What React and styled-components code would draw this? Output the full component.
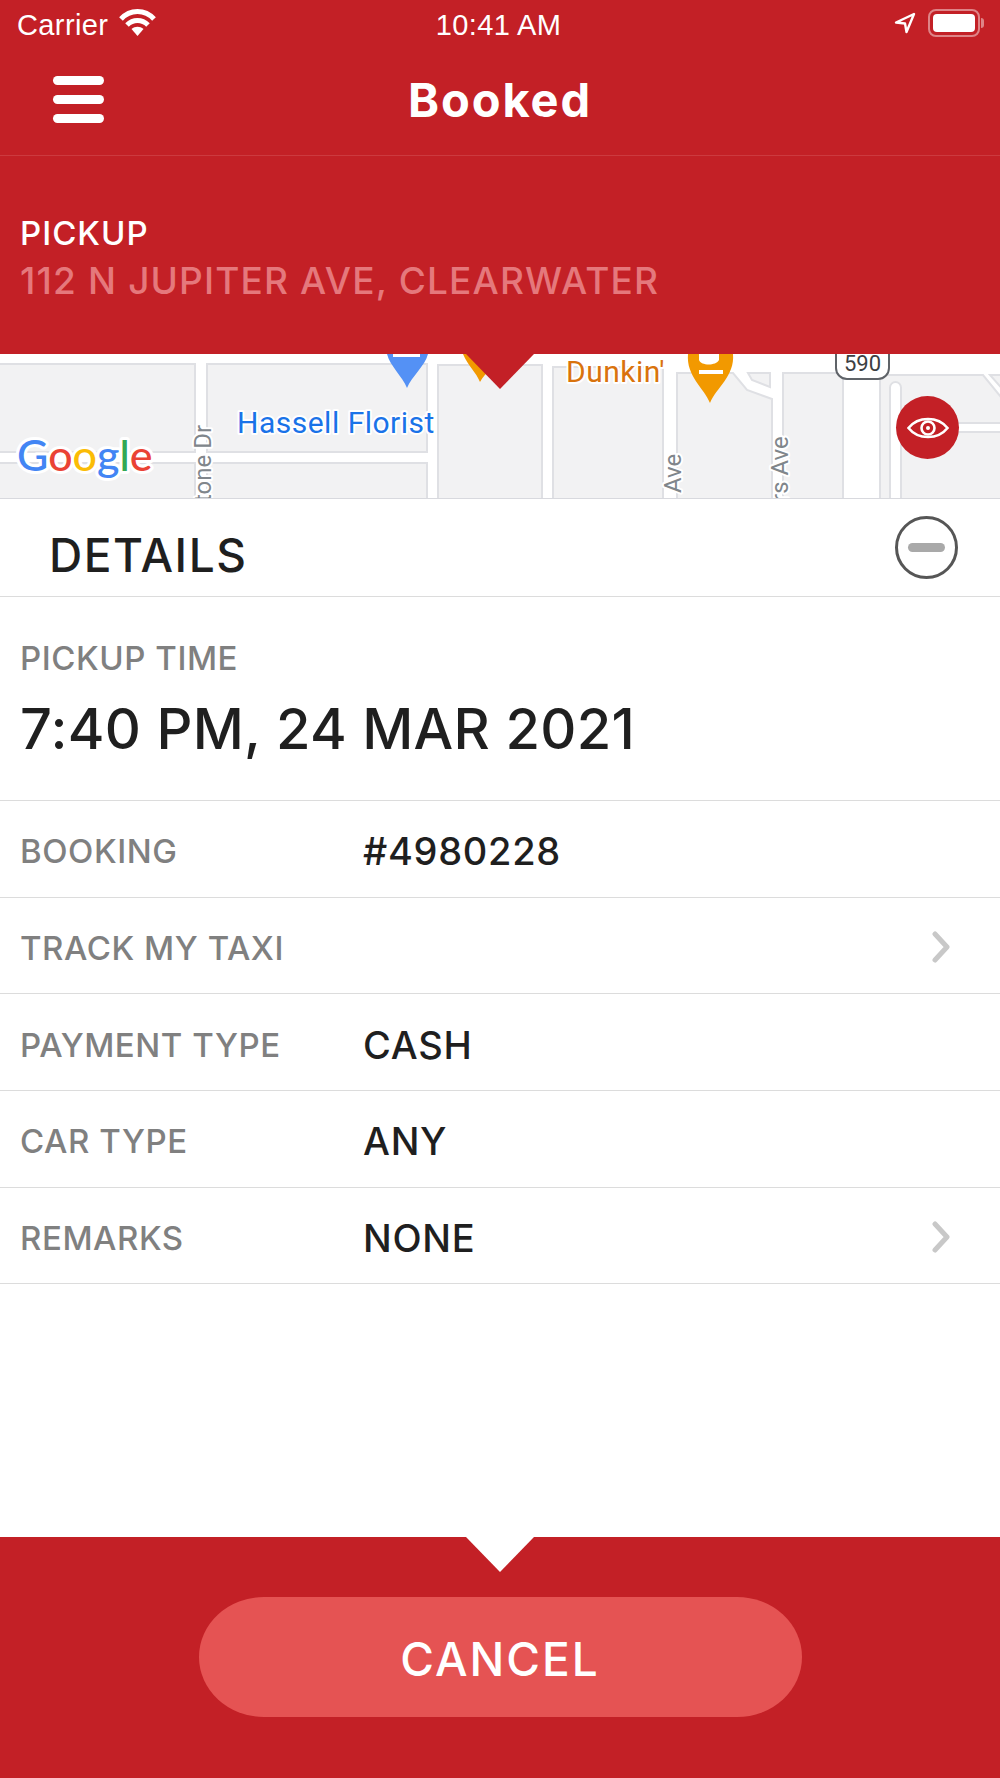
import React from 'react';
import styled, { createGlobalStyle } from 'styled-components';

const red = '#c32026';
const line = '#dcdcdc';

const GlobalStyle = createGlobalStyle`
  html, body {
    margin: 0;
    padding: 0;
    background: #fff;
  }
  body {
    font-family: Inter, "Liberation Sans", sans-serif;
  }
`;

const Page = styled.div`
  width: 1000px;
  height: 1778px;
  display: flex;
  flex-direction: column;
  overflow: hidden;
  background: #fff;
`;

const Top = styled.header`
  background: ${red};
  color: #fff;
`;

const StatusBar = styled.div`
  height: 46px;
  display: grid;
  grid-template-columns: 1fr auto 1fr;
  align-items: center;
  padding: 4px 20px 0 17px;
  box-sizing: border-box;
  font-family: "Liberation Sans", Arial, sans-serif;
  font-size: 29px;
  letter-spacing: 0.4px;
`;

const StatusLeft = styled.div`
  display: flex;
  align-items: center;
  gap: 11px;

  svg {
    margin-top: -4px;
  }
`;

const StatusRight = styled.div`
  display: flex;
  align-items: center;
  justify-content: flex-end;
  gap: 12px;

  svg {
    margin-top: -4px;
  }
`;

const Battery = styled.div`
  position: relative;
  box-sizing: border-box;
  width: 52px;
  height: 28px;
  margin-top: -4px;
  padding: 3px;
  border: 2px solid rgba(255, 255, 255, 0.45);
  border-radius: 8px;

  &::before {
    content: '';
    display: block;
    height: 100%;
    background: #fff;
    border-radius: 4px;
  }

  &::after {
    content: '';
    position: absolute;
    right: -6px;
    top: 7px;
    width: 3px;
    height: 10px;
    background: rgba(255, 255, 255, 0.45);
    border-radius: 0 3px 3px 0;
  }
`;

const Nav = styled.div`
  height: 110px;
  box-sizing: border-box;
  display: grid;
  grid-template-columns: 1fr auto 1fr;
  align-items: center;
  padding: 0 53px 2px;
  border-bottom: 1px solid #cc3a3f;
`;

const Burger = styled.div`
  width: 51px;
  display: flex;
  flex-direction: column;
  gap: 10px;

  span {
    height: 9px;
    background: #fff;
    border-radius: 5px;
  }
`;

const Title = styled.h1`
  margin: 0;
  font-size: 47px;
  line-height: 60px;
  font-weight: 700;
  letter-spacing: 1.9px;
`;

const Pickup = styled.div`
  height: 198px;
  box-sizing: border-box;
  padding: 57px 20px 0;
`;

const PickupLabel = styled.div`
  font-size: 33px;
  line-height: 40px;
  font-weight: 500;
  letter-spacing: 1px;
`;

const PickupAddress = styled.div`
  font-size: 37px;
  line-height: 48px;
  font-weight: 500;
  letter-spacing: 1.15px;
  margin-top: 4px;
  color: #e5787c;
`;

const MapArea = styled.div`
  position: relative;
  height: 145px;
  box-sizing: border-box;
  border-bottom: 1px solid #d8d9de;
  background: #fff;

  svg {
    display: block;
  }
`;

const Notch = styled.div`
  position: absolute;
  top: 0;
  left: 466px;
  width: 68px;
  height: 35px;
  background: ${(p) => p.$color};
  clip-path: polygon(0 0, 100% 0, 50% 100%);
`;

const EyeButton = styled.div`
  position: absolute;
  left: 896px;
  top: 42px;
  width: 63px;
  height: 63px;
  border-radius: 50%;
  background: ${red};
  display: flex;
  align-items: center;
  justify-content: center;
`;

const DetailsHead = styled.div`
  height: 98px;
  box-sizing: border-box;
  display: flex;
  align-items: center;
  justify-content: space-between;
  padding: 0 42px 0 49px;
  border-bottom: 1px solid ${line};
`;

const DetailsTitle = styled.h2`
  margin: 14px 0 0;
  color: #1f1f1f;
  font-size: 46px;
  line-height: 60px;
  font-weight: 500;
  letter-spacing: 1.5px;
`;

const Collapse = styled.div`
  width: 63px;
  height: 63px;
  box-sizing: border-box;
  border: 3px solid #565656;
  border-radius: 50%;
  display: flex;
  align-items: center;
  justify-content: center;

  span {
    width: 37px;
    height: 9px;
    border-radius: 5px;
    background: #a9a9a9;
  }
`;

const TimeBlock = styled.div`
  height: 204px;
  box-sizing: border-box;
  padding: 41px 20px 0;
  border-bottom: 1px solid ${line};
`;

const Label = styled.div`
  color: #808080;
  font-size: 33px;
  line-height: 40px;
  font-weight: 500;
  letter-spacing: 0.55px;
`;

const TimeValue = styled.div`
  margin-top: 16px;
  color: #1f1f1f;
  font-size: 56px;
  line-height: 70px;
  font-weight: 500;
  letter-spacing: 0.3px;
`;

const Row = styled.div`
  height: 96.7px;
  box-sizing: border-box;
  display: flex;
  align-items: center;
  padding: 5px 50px 0 20px;
  border-bottom: 1px solid ${line};

  svg {
    margin-top: -3px;
  }
`;

const RowLabel = styled(Label)`
  width: 343px;
  flex: none;
`;

const RowValue = styled.div`
  flex: 1;
  color: #1f1f1f;
  font-size: 38px;
  line-height: 50px;
  font-weight: 500;
  letter-spacing: 0.7px;
`;

const Spacer = styled.div`
  flex: 1;
`;

const Footer = styled.footer`
  position: relative;
  height: 241px;
  flex: none;
  background: ${red};
  display: flex;
  justify-content: center;
  padding-top: 60px;
  box-sizing: border-box;
`;

const CancelButton = styled.button`
  width: 603px;
  height: 120px;
  border: 0;
  padding: 4px 0 0;
  border-radius: 65px / 60px;
  background: #e55353;
  color: #fff;
  font-family: inherit;
  font-size: 46px;
  font-weight: 500;
  letter-spacing: 2px;
`;

const WifiIcon = () => (
  <svg width="37" height="28" viewBox="0 0 37 28" fill="none" stroke="#fff" strokeWidth="5">
    <path d="M2 10 C11 0 26 0 35 10" />
    <path d="M8 16 C14 10 23 10 29 16" />
    <path d="M18.5 27 L12.5 20 C16 17 21 17 24.5 20 Z" fill="#fff" stroke="none" />
  </svg>
);

const LocationIcon = () => (
  <svg width="22" height="22" viewBox="0 0 22 22" fill="none" stroke="#fff" strokeWidth="2.4" strokeLinejoin="round">
    <path d="M20 2 L2 10.5 L11 11.5 L12.5 20 Z" />
  </svg>
);

const EyeIcon = () => (
  <svg width="42" height="26" viewBox="0 0 42 26" fill="none" stroke="#fff">
    <path d="M1.5 13 C11 1 31 1 40.5 13 C31 25 11 25 1.5 13 Z" strokeWidth="2.6" />
    <circle cx="21" cy="13" r="6.5" strokeWidth="2.6" />
    <circle cx="21" cy="13" r="2" fill="#fff" stroke="none" />
  </svg>
);

const ChevronIcon = () => (
  <svg width="18" height="32" viewBox="0 0 18 32" fill="none" stroke="#c8c8c8" strokeWidth="5" strokeLinecap="round" strokeLinejoin="round">
    <path d="M3 3 L15 16 L3 29" />
  </svg>
);

// city blocks, in page coordinates; the roads are the white left between them
const blocks = [
  '-5,364 195,364 195,452 -5,452',
  '207,364 427,364 427,452 207,452',
  '-5,463 195,463 195,505 -5,505',
  '207,463 427,463 427,505 207,505',
  '438,365 542,365 542,505 438,505',
  '553,367 663,367 663,505 553,505',
  '677,373 733,373 747,390 772,399 772,505 677,505',
  '748,373 770,373 770,387 752,380',
  '783,373 843,373 843,505 783,505',
  '880,375 983,375 1005,402 1005,505 880,505',
  '990,375 1005,375 1005,392',
];

const halo = { paintOrder: 'stroke', stroke: '#fff', strokeWidth: 4, strokeLinejoin: 'round' };

const MapDrawing = () => (
  <svg width="1000" height="144" viewBox="0 354 1000 144" fontFamily="Roboto, sans-serif">
    {blocks.map((points) => (
      <polygon key={points} points={points} fill="#f2f2f3" stroke="#dfe0e4" strokeWidth="2" />
    ))}
    <rect x="890" y="382" width="11" height="130" rx="5.5" fill="#fff" stroke="#dfe0e4" strokeWidth="2" />
    <rect x="901" y="423" width="110" height="9" fill="#fff" stroke="#dfe0e4" strokeWidth="2" />
    <rect x="892" y="400" width="8" height="100" fill="#fff" />

    <rect x="836" y="340" width="53" height="39" rx="11" fill="#fff" stroke="#5f6368" strokeWidth="2" />
    <text x="862.5" y="371" textAnchor="middle" fontSize="22" fill="#3c4043">590</text>

    <path d="M387 354 H428 C425 366 412 376 407 388 C402 376 390 366 387 354 Z" fill="#5491f5" />
    <rect x="393" y="350" width="27" height="7" fill="#fff" />
    <path d="M463 354 H505 C497 366 485 372 480 382 C476 372 468 366 463 354 Z" fill="#f29900" />
    <path d="M688 354 H733 C735 376 716 388 710 403 C704 388 686 376 688 354 Z" fill="#f29900" />
    <path d="M699 354 V360 C701 366 716 366 719 360 V354 Z" fill="#fff" />
    <rect x="699" y="370" width="24" height="4" fill="#fff" />

    <text x="237" y="433" fontSize="30" letterSpacing="0.5" fill="#1a73e8" style={halo}>Hassell Florist</text>
    <text x="566" y="382" fontSize="30" letterSpacing="0.5" fill="#d9730d" style={halo}>Dunkin'</text>
    <text transform="translate(211 502) rotate(-90)" fontSize="24" fill="#80868b" style={halo}>tone Dr</text>
    <text transform="translate(681 493) rotate(-90)" fontSize="24" fill="#80868b" style={halo}>Ave</text>
    <text transform="translate(788 502) rotate(-90)" fontSize="24" fill="#80868b" style={halo}>rs Ave</text>

    <text x="17" y="471" fontSize="43" fontFamily="Lato, sans-serif" fontWeight="500" style={{ ...halo, strokeWidth: 6 }}>
      <tspan fill="#4285f4">G</tspan>
      <tspan fill="#ea4335">o</tspan>
      <tspan fill="#fbbc05">o</tspan>
      <tspan fill="#4285f4">g</tspan>
      <tspan fill="#34a853">l</tspan>
      <tspan fill="#ea4335">e</tspan>
    </text>
  </svg>
);

const rows = [
  { label: 'BOOKING', value: '#4980228' },
  { label: 'TRACK MY TAXI', link: true },
  { label: 'PAYMENT TYPE', value: 'CASH' },
  { label: 'CAR TYPE', value: 'ANY' },
  { label: 'REMARKS', value: 'NONE', link: true },
];

export default function App() {
  return (
    <Page>
      <GlobalStyle />
      <Top>
        <StatusBar>
          <StatusLeft>
            <span>Carrier</span>
            <WifiIcon />
          </StatusLeft>
          <span>10:41 AM</span>
          <StatusRight>
            <LocationIcon />
            <Battery />
          </StatusRight>
        </StatusBar>
        <Nav>
          <Burger>
            <span />
            <span />
            <span />
          </Burger>
          <Title>Booked</Title>
        </Nav>
        <Pickup>
          <PickupLabel>PICKUP</PickupLabel>
          <PickupAddress>112 N JUPITER AVE, CLEARWATER</PickupAddress>
        </Pickup>
      </Top>
      <MapArea>
        <MapDrawing />
        <Notch $color={red} />
        <EyeButton>
          <EyeIcon />
        </EyeButton>
      </MapArea>
      <DetailsHead>
        <DetailsTitle>DETAILS</DetailsTitle>
        <Collapse>
          <span />
        </Collapse>
      </DetailsHead>
      <TimeBlock>
        <Label>PICKUP TIME</Label>
        <TimeValue>7:40 PM, 24 MAR 2021</TimeValue>
      </TimeBlock>
      {rows.map((row) => (
        <Row key={row.label}>
          <RowLabel>{row.label}</RowLabel>
          <RowValue>{row.value}</RowValue>
          {row.link && <ChevronIcon />}
        </Row>
      ))}
      <Spacer />
      <Footer>
        <Notch $color="#fff" />
        <CancelButton>CANCEL</CancelButton>
      </Footer>
    </Page>
  );
}
